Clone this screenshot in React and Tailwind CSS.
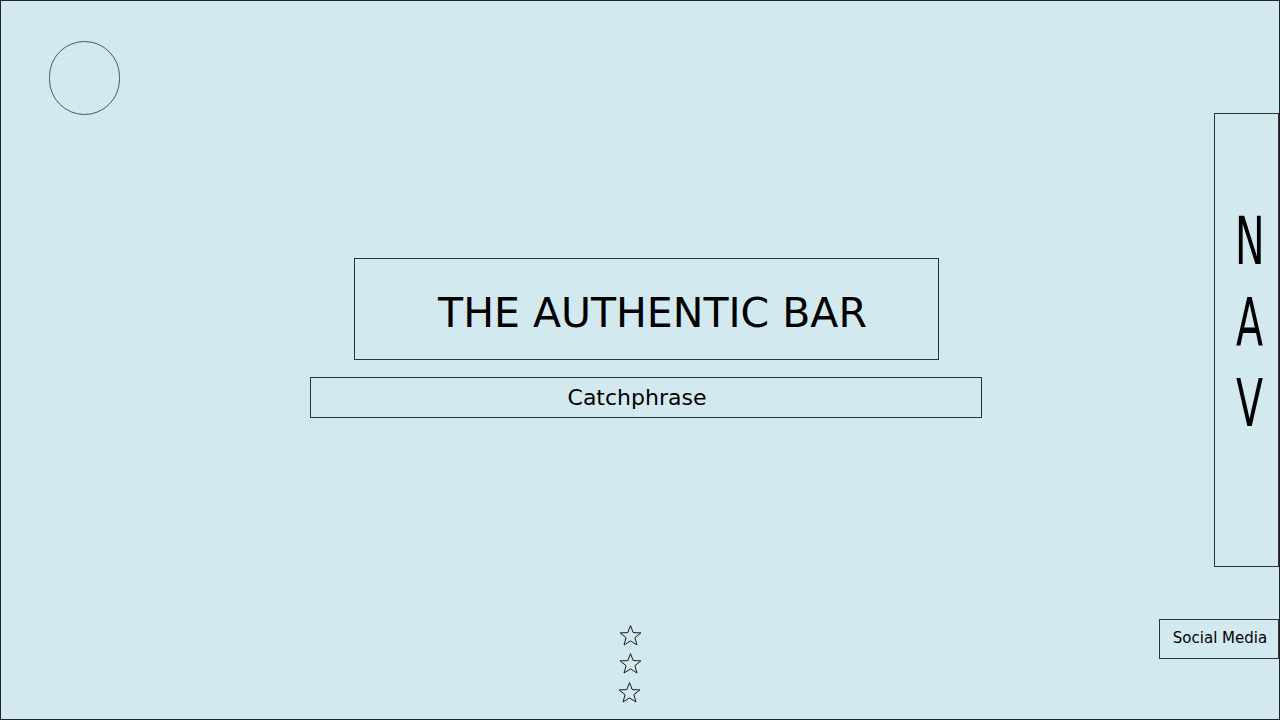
function Star() {
  return (
    <svg width="23" height="21" viewBox="0 0 23 21" fill="none" stroke="#1a1a1a" strokeWidth="1" strokeLinejoin="miter">
      <polygon points="11.5,0.6 14.2,7.6 21.9,7.9 15.9,12.7 18,20 11.5,15.9 5,20 7.1,12.7 1.1,7.9 8.8,7.6" />
    </svg>
  )
}

export default function App() {
  return (
    <div className="w-[1280px] h-[720px] bg-[#d2e9f0] border border-[#222] flex flex-col font-['DejaVu_Sans',sans-serif] text-black overflow-hidden">
      <div className="flex h-[566px]">
        <div className="flex-1 flex flex-col items-start">
          <div className="mt-[40px] ml-[48px] w-[71px] h-[74px] rounded-full border border-[#4b5a60]"></div>
          <div className="mt-[143px] ml-[353px] w-[585px] h-[102px] border border-[#333] flex items-center justify-center pl-[12px] pt-[9px]">
            <span className="text-[41px] leading-none">THE AUTHENTIC BAR</span>
          </div>
          <div className="mt-[17px] ml-[309px] w-[672px] h-[41px] border border-[#333] flex items-center justify-center pr-[18px]">
            <span className="text-[22px] leading-none">Catchphrase</span>
          </div>
        </div>
        <div className="mt-[112px] w-[65px] h-[454px] border border-[#333] flex flex-col items-center pt-[87px] pl-[6px]">
          <span className="inline-block text-[66px] leading-[81px] scale-x-[0.6]">N</span>
          <span className="inline-block text-[66px] leading-[81px] scale-x-[0.6]">A</span>
          <span className="inline-block text-[66px] leading-[81px] scale-x-[0.6]">V</span>
        </div>
      </div>
      <div className="flex items-start flex-1">
        <div className="mt-[58px] ml-[618px] flex flex-col gap-[7px]">
          <Star />
          <Star />
          <div className="mt-px -ml-px"><Star /></div>
        </div>
        <div className="ml-auto mt-[52px] w-[120px] h-[40px] border border-[#333] flex items-center justify-center pl-[2px]">
          <span className="text-[15px] leading-none -mt-[2px]">Social Media</span>
        </div>
      </div>
    </div>
  )
}
